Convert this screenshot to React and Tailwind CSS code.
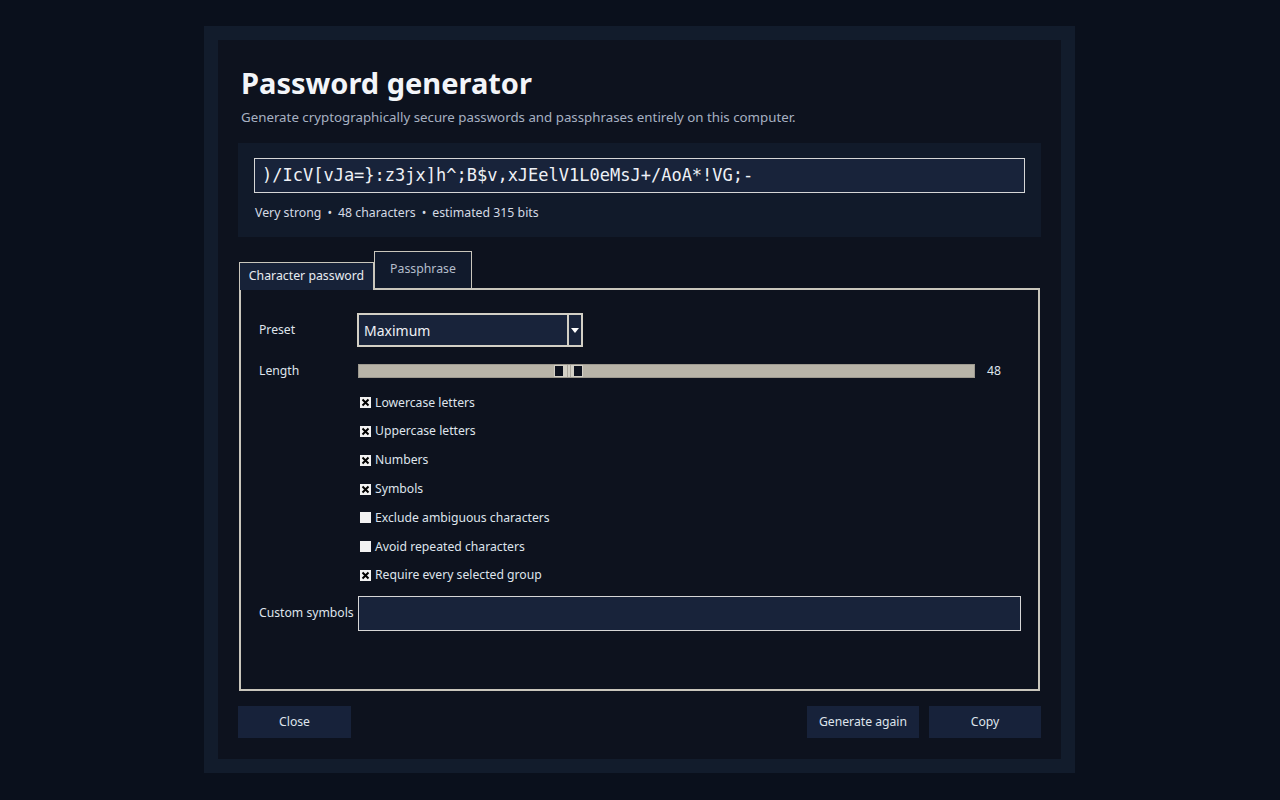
import React from "react";

const options = [
    { label: "Lowercase letters", checked: true },
    { label: "Uppercase letters", checked: true },
    { label: "Numbers", checked: true },
    { label: "Symbols", checked: true },
    { label: "Exclude ambiguous characters", checked: false },
    { label: "Avoid repeated characters", checked: false },
    { label: "Require every selected group", checked: true },
];

const Check = ({ checked }) => (
    <span className="w-[11px] h-[11px] bg-[#f2f2f2] flex items-center justify-center shrink-0">
        {checked && (
            <svg width="9" height="9" viewBox="0 0 9 9">
                <path d="M1.5 1.5L7.5 7.5M7.5 1.5L1.5 7.5" stroke="#000" strokeWidth="2" />
            </svg>
        )}
    </span>
);

const Button = ({ children, className }) => (
    <button className={"h-[32px] bg-[#17223a] text-[12.2px] text-[#dfe4ec] " + className}>
        {children}
    </button>
);

export default function App() {
    return (
        <div
            className="min-h-screen bg-[#0a101c] flex justify-center pt-[26px] text-[#e4e8ef]"
            style={{ fontFamily: "'Noto Sans', 'Open Sans', sans-serif" }}
        >
            <div className="w-[871px] h-[747px] bg-[#121c2c] p-[14px] ml-[-1px]">
                <div className="h-full bg-[#0d121e] px-[20px] pt-[23px]">
                    <h1 className="text-[29px] font-bold leading-[40px] text-[#f3f5f9] pl-[3px]">
                        Password generator
                    </h1>
                    <p className="text-[13.3px] leading-[20px] text-[#a7b1c2] pl-[3px] mt-[4px]">
                        Generate cryptographically secure passwords and passphrases entirely on this computer.
                    </p>

                    <div className="mt-[16px] h-[94px] bg-[#111a2a] px-[16px] pt-[15px]">
                        <div
                            className="h-[35px] bg-[#18233a] border border-[#d6d6d6] flex items-center px-[7px] text-[17px] text-[#eef1f6]"
                            style={{ fontFamily: "'DejaVu Sans Mono', monospace" }}
                        >
                            {")/IcV[vJa=}:z3jx]h^;B$v,xJEelV1L0eMsJ+/AoA*!VG;-"}
                        </div>
                        <div className="mt-[11px] text-[12.3px] text-[#d5dbe5] flex items-center gap-[6px] pl-[1px]">
                            <span>Very strong</span>
                            <span>•</span>
                            <span>48 characters</span>
                            <span>•</span>
                            <span>estimated 315 bits</span>
                        </div>
                    </div>

                    <div className="mt-[13px] flex items-end h-[38px] pl-[1px]">
                        <div className="h-[28px] w-[135px] bg-[#172238] border border-b-0 border-[#c9c6bc] text-[12.3px] flex items-center justify-center text-[#e8ecf2] mb-[-2px] relative z-10">
                            Character password
                        </div>
                        <div className="h-[37px] w-[98px] bg-[#111a2c] border border-b-0 border-[#c9c6bc] text-[12.3px] flex items-center justify-center text-[#b4bdcb] pb-[2px]">
                            Passphrase
                        </div>
                    </div>

                    <div className="ml-[1px] w-[801px] h-[403px] border-2 border-[#c9c6bc] pl-[18px] pr-[18px] pt-[23px]">
                        <div className="grid grid-cols-[98px_1fr] items-center text-[12.2px] text-[#dfe4ec]">
                            <span>Preset</span>
                            <div className="flex h-[34px] w-[226px]">
                                <div className="flex-1 bg-[#18233a] border-2 border-[#d2cfc5] flex items-center px-[5px] text-[14px] text-[#eef1f6]">
                                    Maximum
                                </div>
                                <div className="w-[14px] bg-[#18233a] border-2 border-l-0 border-[#d2cfc5] flex items-center justify-center">
                                    <svg width="8" height="5" viewBox="0 0 8 5">
                                        <path d="M0 0H8L4 5Z" fill="#fff" />
                                    </svg>
                                </div>
                            </div>

                            <span className="mt-[15px]">Length</span>
                            <div className="mt-[15px] flex items-center">
                                <div className="ml-[1px] w-[617px] h-[14px] bg-[#b8b4a8] border border-[#9d998f] relative">
                                    <div className="absolute left-[195px] top-[0px] h-[12px] w-[29px] bg-[#d3d0c6] flex">
                                        <span className="w-[10px] h-[12px] bg-[#0d121e] border border-[#d3d0c6]" />
                                        <span className="flex-1 flex justify-center gap-[2px]">
                                            <span className="w-[1px] bg-[#aaa69c]" />
                                            <span className="w-[1px] bg-[#aaa69c]" />
                                        </span>
                                        <span className="w-[10px] h-[12px] bg-[#0d121e] border border-[#d3d0c6]" />
                                    </div>
                                </div>
                                <span className="ml-[12px]">48</span>
                            </div>

                            <span />
                            <div className="mt-[8px] flex flex-col">
                                {options.map((opt) => (
                                    <div key={opt.label} className="h-[28.8px] flex items-center gap-[4px] pl-[3px]">
                                        <Check checked={opt.checked} />
                                        <span>{opt.label}</span>
                                    </div>
                                ))}
                            </div>

                            <span className="mt-[6px] whitespace-nowrap">Custom symbols</span>
                            <div className="mt-[6px] ml-[1px] h-[35px] w-[663px] bg-[#18233a] border border-[#d6d6d6]" />
                        </div>
                    </div>

                    <div className="mt-[15px] flex">
                        <Button className="w-[113px]">Close</Button>
                        <div className="flex-1" />
                        <Button className="w-[112px]">Generate again</Button>
                        <Button className="w-[112px] ml-[10px]">Copy</Button>
                    </div>
                </div>
            </div>
        </div>
    );
}
